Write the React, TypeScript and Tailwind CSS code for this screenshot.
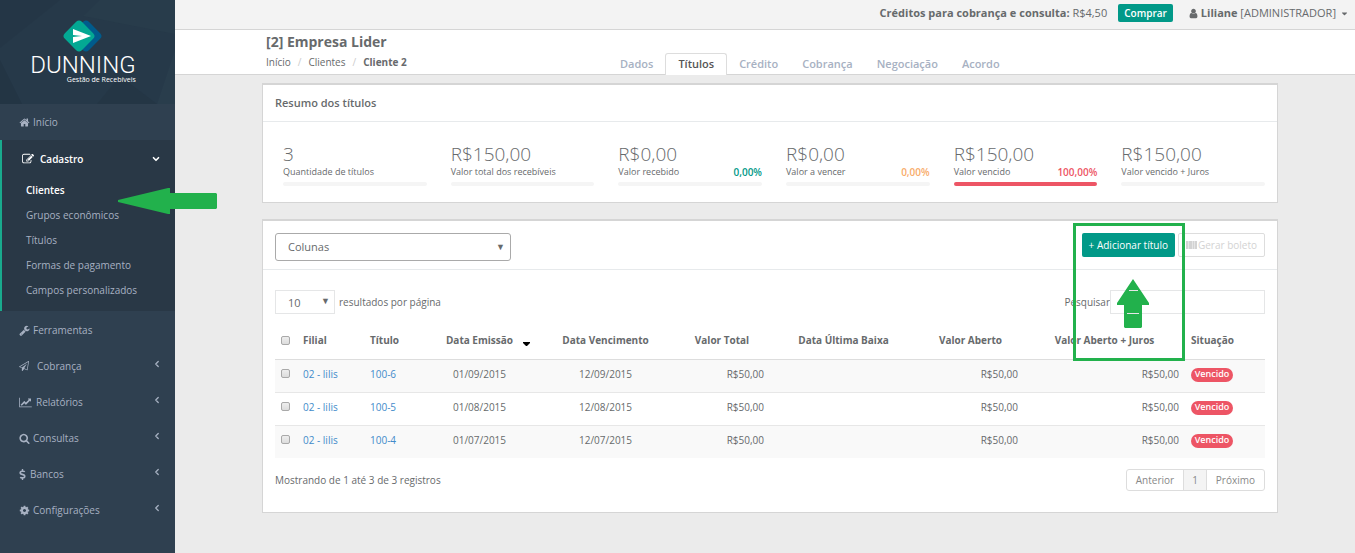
import type { ReactNode } from 'react';
import { ChevronDown, ChevronLeft } from 'lucide-react';
import { FaCaretDown, FaDollarSign } from 'react-icons/fa';

const icons = {
  home: 'M1472 992v480q0 26-19 45t-45 19h-384v-384h-256v384h-384q-26 0-45-19t-19-45v-480q0-1 .5-3t.5-3l575-474 575 474q1 2 1 6zm223-69l-62 74q-8 9-21 11h-3q-13 0-21-7l-692-577-692 577q-12 8-24 7-13-2-21-11l-62-74q-8-10-7-23.5t11-21.5l719-599q32-26 76-26t76 26l244 204v-195q0-14 9-23t23-9h192q14 0 23 9t9 23v408l219 182q10 8 11 21.5t-7 23.5z',
  edit: 'M888 1184l116-116-152-152-116 116v56h96v96h56zm440-720q-16-16-33 1l-350 350q-17 17-1 33t33-1l350-350q17-17 1-33zm80 594v190q0 119-84.5 203.5t-203.5 84.5h-832q-119 0-203.5-84.5t-84.5-203.5v-832q0-119 84.5-203.5t203.5-84.5h832q63 0 117 25 15 7 18 23 3 17-9 29l-49 49q-14 14-32 8-23-6-45-6h-832q-66 0-113 47t-47 113v832q0 66 47 113t113 47h832q66 0 113-47t47-113v-126q0-13 9-22l64-64q15-15 35-7t20 29zm-96-738l288 288-672 672h-288v-288zm444 132l-92 92-288-288 92-92q28-28 68-28t68 28l152 152q28 28 28 68t-28 68z',
  user: 'M1536 1399q0 109-62.5 187t-150.5 78h-854q-88 0-150.5-78t-62.5-187q0-85 8.5-160.5t31.5-152 58.5-131 94-89 134.5-34.5q131 128 313 128t313-128q76 0 134.5 34.5t94 89 58.5 131 31.5 152 8.5 160.5zm-256-887q0 159-112.5 271.5t-271.5 112.5-271.5-112.5-112.5-271.5 112.5-271.5 271.5-112.5 271.5 112.5 112.5 271.5z',
  chart: 'M2048 1536v128h-2048v-1536h128v1408h1920zm-128-1248v435q0 21-19.5 29.5t-35.5-7.5l-121-121-633 633q-10 10-23 10t-23-10l-233-233-416 416-192-192 585-585q10-10 23-10t23 10l233 233 464-464-121-121q-16-16-7.5-35.5t29.5-19.5h435q14 0 23 9t9 23z',
  plane: 'M1764 11q33 24 27 64l-256 1536q-5 29-32 45-14 8-31 8-11 0-24-5l-527-215-298 327q-18 21-47 21-14 0-23-4-19-7-30-23.5t-11-36.5v-452l-472-193q-37-14-40-55-3-39 32-59l1664-960q35-21 68 2zm-342 1499l221-1323-1434 827 336 137 863-639-478 797z',
  search: 'M1216 832q0-185-131.5-316.5t-316.5-131.5-316.5 131.5-131.5 316.5 131.5 316.5 316.5 131.5 316.5-131.5 131.5-316.5zm512 832q0 52-38 90t-90 38q-54 0-90-38l-343-342q-179 124-399 124-143 0-273.5-55.5t-225-150-150-225-55.5-273.5 55.5-273.5 150-225 225-150 273.5-55.5 273.5 55.5 225 150 150 225 55.5 273.5q0 220-124 399l343 343q37 37 37 90z',
  cog: 'M1152 896q0-106-75-181t-181-75-181 75-75 181 75 181 181 75 181-75 75-181zm512-109v222q0 12-8 23t-20 13l-185 28q-19 54-39 91 35 50 107 138 10 12 10 25t-9 23q-27 37-99 108t-94 71q-12 0-26-9l-138-108q-44 23-91 38-16 136-29 186-7 28-36 28h-222q-14 0-24.5-8.5t-11.5-21.5l-28-184q-49-16-90-37l-141 107q-10 9-25 9-14 0-25-11-126-114-165-168-7-10-7-23 0-12 8-23 15-21 51-66.5t54-70.5q-27-50-41-99l-183-27q-13-2-21-12.5t-8-23.5v-222q0-12 8-23t19-13l186-28q14-46 39-92-40-57-107-138-10-12-10-24 0-10 9-23 26-36 98.5-107.5t94.5-71.5q13 0 26 10l138 107q44-23 91-38 16-136 29-186 7-28 36-28h222q14 0 24.5 8.5t11.5 21.5l28 184q49 16 90 37l142-107q9-9 24-9 13 0 25 10 129 119 165 170 7 8 7 22 0 12-8 23-15 21-51 66.5t-54 70.5q26 50 41 98l183 28q13 2 21 12.5t8 23.5z',
  wrench: 'M448 1472q0-26-19-45t-45-19-45 19-19 45 19 45 45 19 45-19 19-45zm644-420l-682 682q-37 37-90 37-52 0-91-37l-106-108q-38-36-38-90 0-53 38-91l681-681q39 98 114.5 173.5t173.5 114.5zm634-435q0 39-23 106-47 134-164.5 217.5t-258.5 83.5q-185 0-316.5-131.5t-131.5-316.5 131.5-316.5 316.5-131.5q58 0 121.5 16.5t107.5 46.5q16 11 16 28t-16 28l-293 169v224l193 107q5-3 79-48.5t135.5-81 70.5-35.5q15 0 23.5 10t8.5 25z',
};

function Icon({ name, className }: { name: keyof typeof icons; className: string }) {
  return (
    <svg viewBox={name === 'chart' ? '0 0 2048 1792' : '0 0 1792 1792'} fill="currentColor" className={className} aria-hidden="true">
      <path d={icons[name]} />
    </svg>
  );
}

interface MenuItem {
  label: string;
  icon: ReactNode;
  hasChildren: boolean;
}

const menu: MenuItem[] = [
  { label: 'Ferramentas', icon: <Icon name="wrench" className="mr-[3px] size-[11px]" />, hasChildren: false },
  { label: 'Cobrança', icon: <Icon name="plane" className="mr-2 size-[10px]" />, hasChildren: true },
  { label: 'Relatórios', icon: <Icon name="chart" className="mr-1 h-[11px] w-[13px]" />, hasChildren: true },
  { label: 'Consultas', icon: <Icon name="search" className="mr-[3px] size-[11px]" />, hasChildren: true },
  { label: 'Bancos', icon: <FaDollarSign className="mr-1 h-[11px] w-[7px]" />, hasChildren: true },
  { label: 'Configurações', icon: <Icon name="cog" className="mr-[3px] size-[11px]" />, hasChildren: true },
];

const submenu = ['Clientes', 'Grupos econômicos', 'Títulos', 'Formas de pagamento', 'Campos personalizados'];

const tabs = ['Dados', 'Títulos', 'Crédito', 'Cobrança', 'Negociação', 'Acordo'];

const stats = [
  { value: '3', label: 'Quantidade de títulos', percent: '', color: '', bar: 'bg-[#f5f5f5]' },
  { value: 'R$150,00', label: 'Valor total dos recebíveis', percent: '', color: '', bar: 'bg-[#f5f5f5]' },
  { value: 'R$0,00', label: 'Valor recebido', percent: '0,00%', color: 'text-[#019988]', bar: 'bg-[#f5f5f5]' },
  { value: 'R$0,00', label: 'Valor a vencer', percent: '0,00%', color: 'text-[#f8ac6a]', bar: 'bg-[#f5f5f5]' },
  { value: 'R$150,00', label: 'Valor vencido', percent: '100,00%', color: 'text-[#ed5565]', bar: 'bg-[#ed5565]' },
  { value: 'R$150,00', label: 'Valor vencido + Juros', percent: '', color: '', bar: 'bg-[#f5f5f5]' },
];

const rows = [
  { filial: '02 - lilis', titulo: '100-6', emissao: '01/09/2015', vencimento: '12/09/2015', valor: 'R$50,00' },
  { filial: '02 - lilis', titulo: '100-5', emissao: '01/08/2015', vencimento: '12/08/2015', valor: 'R$50,00' },
  { filial: '02 - lilis', titulo: '100-4', emissao: '01/07/2015', vencimento: '12/07/2015', valor: 'R$50,00' },
];

function Checkbox({ label }: { label: string }) {
  return (
    <input
      type="checkbox"
      aria-label={label}
      className="block size-[9px] appearance-none rounded-[2px] border border-[#a9a9a9] bg-linear-to-b from-[#eeeeee] to-[#dcdcdc] checked:bg-[#019988]"
    />
  );
}

function Brand() {
  return (
    <div className="relative h-[104px] overflow-hidden bg-[#263949]">
      <svg viewBox="0 0 175 104" className="absolute inset-0 size-full" preserveAspectRatio="none" aria-hidden="true">
        <path d="M0 0h60L0 48z" fill="#243646" />
        <path d="M100 0h75v34l-92-18z" fill="#283c4b" />
        <path d="M0 60l22 44H0z" fill="#233544" />
        <path d="M175 50l-18 54h18z" fill="#293d4c" />
        <path d="M120 76l37 28h-60z" fill="#243645" />
      </svg>
      <div className="relative flex flex-col items-center pt-[18px] pr-[9px]">
        <svg viewBox="0 0 42 36" className="h-9 w-[42px]" aria-hidden="true">
          <rect x="12" y="6" width="24" height="24" rx="4" transform="rotate(45 24 18)" fill="#005b8c" />
          <rect x="5" y="6" width="24" height="24" rx="4" transform="rotate(45 17 18)" fill="#03a893" />
          <path d="M11 11l18 7-18 7v-6l9-1-9-1z" fill="#fff" />
        </svg>
        <div className="flex flex-col items-end text-white">
          <span className="font-[Roboto,sans-serif] text-[24px] leading-[23px] font-light">DUNNING</span>
          <span className="text-[7px] leading-[6px]">Gestão de Recebíveis</span>
        </div>
      </div>
    </div>
  );
}

function Sidebar() {
  return (
    <aside className="w-[175px] shrink-0 bg-[#2f4050] text-[#a7b1c2]">
      <Brand />
      <nav>
        <a href="#inicio" className="flex h-9 items-center pl-[19px]">
          <Icon name="home" className="mr-[3px] size-[11px]" />
          Início
        </a>
        <div className="relative border-l-2 border-[#19aa8d] bg-[#293846] pb-[9px]">
          <a href="#cadastro" className="flex h-[37px] items-center pr-[14px] pl-5 font-semibold text-white">
            <Icon name="edit" className="mr-[6px] size-[12px]" />
            Cadastro
            <ChevronDown className="ml-auto size-[10px]" strokeWidth={4} />
          </a>
          <ul>
            {submenu.map((item) => (
              <li key={item}>
                <a
                  href="#submenu"
                  className={item === 'Clientes' ? 'flex h-[25px] items-center pl-6 font-semibold text-white' : 'flex h-[25px] items-center pl-6'}
                >
                  {item}
                </a>
              </li>
            ))}
          </ul>
          {/* arrow pointing at the current submenu entry */}
          <svg viewBox="0 0 99 26" className="absolute top-12 left-[116px] z-10 h-[26px] w-[99px]" fill="#22b14c" aria-hidden="true">
            <path d="M0 12L50 0h2v5h46l1 1v14l-1 1H52v5h-2L0 14z" />
          </svg>
        </div>
        <ul className="pt-px">
          {menu.map((item) => (
            <li key={item.label}>
              <a href="#menu" className="flex h-9 items-center pr-[13px] pl-[19px]">
                {item.icon}
                {item.label}
                {item.hasChildren && <ChevronLeft className="mb-1 ml-auto size-[10px]" strokeWidth={3} />}
              </a>
            </li>
          ))}
        </ul>
      </nav>
    </aside>
  );
}

function PageHeader() {
  return (
    <header>
      <div className="flex h-[30px] items-center justify-end border-b border-[#d5d5d5] bg-[#f3f3f3] pr-[6px] pb-[3px] text-[11px]">
        <span className="mr-[11px]">
          <b>Créditos para cobrança e consulta:</b> R$4,50
        </span>
        <button className="mr-[15px] h-[18px] rounded-[2px] bg-[#019988] px-[6px] text-[10px] font-semibold text-white">Comprar</button>
        <button className="flex items-center">
          <Icon name="user" className="mr-[2px] size-[11px]" />
          <span>
            <b>Liliane</b> [ADMINISTRADOR]
          </span>
          <FaCaretDown className="ml-1 size-[9px]" />
        </button>
      </div>
      <div className="flex h-[45px] border-b border-[#d5d5d5] bg-white pl-[91px]">
        <div className="w-[342px] pt-[3px]">
          <h1 className="text-[14px] leading-[18px] font-bold">[2] Empresa Lider</h1>
          <ol className="flex pt-[3px] leading-[16px]">
            <li>
              <a href="#inicio">Início</a>
            </li>
            <li className="px-[7px] text-[#cccccc]">/</li>
            <li>
              <a href="#clientes">Clientes</a>
            </li>
            <li className="px-[7px] text-[#cccccc]">/</li>
            <li className="font-bold">Cliente 2</li>
          </ol>
        </div>
        <nav className="-mb-px flex items-end text-[11px] font-semibold text-[#a7b1c2]">
          {tabs.map((tab) => (
            <a
              key={tab}
              href="#tab"
              className={
                tab === 'Títulos'
                  ? 'h-[22px] rounded-t-[3px] border border-b-0 border-[#dddddd] bg-white px-3 leading-[20px] text-[#555555]'
                  : 'h-[22px] px-3 leading-[22px]'
              }
            >
              {tab}
            </a>
          ))}
        </nav>
      </div>
    </header>
  );
}

function Summary() {
  return (
    <section className="border border-t-2 border-[#d5d5d5] bg-white">
      <h2 className="border-b border-[#e7eaec] px-3 text-[11px] leading-[36px] font-semibold">Resumo dos títulos</h2>
      <div className="grid h-[80px] grid-cols-6 gap-6 pt-[21px] pr-3 pl-5">
        {stats.map((stat) => (
          <div key={stat.label}>
            <p className="text-[19px] leading-[22px] font-light">{stat.value}</p>
            <p className="flex justify-between pt-px text-[9px] leading-[12px] whitespace-nowrap">
              {stat.label}
              <span className={`text-[10px] font-semibold ${stat.color}`}>{stat.percent}</span>
            </p>
            <div className={`mt-1 h-1 rounded-full ${stat.bar}`} />
          </div>
        ))}
      </div>
    </section>
  );
}

function TitlesTable() {
  return (
    <table className="w-full table-fixed">
      <colgroup>
        <col className="w-[22px]" />
        <col className="w-[67px]" />
        <col className="w-[58px]" />
        <col className="w-[115px]" />
        <col className="w-[137px]" />
        <col className="w-[96px]" />
        <col className="w-[147px]" />
        <col className="w-[107px]" />
        <col className="w-[161px]" />
        <col className="w-[80px]" />
      </colgroup>
      <thead>
        <tr className="h-[37px] border-b border-[#dddddd] whitespace-nowrap">
          <th className="px-[6px]">
            <Checkbox label="Selecionar todos" />
          </th>
          <th className="px-[6px] text-left">Filial</th>
          <th className="px-[6px] text-left">Título</th>
          <th className="relative px-[6px] text-center">
            Data Emissão
            <svg viewBox="0 0 7 4" className="absolute top-[20px] right-[7px] h-1 w-[7px]" aria-hidden="true">
              <path d="M0 0h7v1L4 4H3L0 1z" fill="#000" />
            </svg>
          </th>
          <th className="px-[6px] text-center">Data Vencimento</th>
          <th className="px-[6px] text-center">Valor Total</th>
          <th className="px-[6px] text-center">Data Última Baixa</th>
          <th className="px-[6px] text-center">Valor Aberto</th>
          <th className="px-[6px] text-center">Valor Aberto + Juros</th>
          <th className="px-[6px] text-left">Situação</th>
        </tr>
      </thead>
      <tbody>
        {rows.map((row) => (
          <tr key={row.titulo} className="h-[33px] border-b border-[#e7e7e7] last:border-b-0 odd:bg-[#f9f9f9]">
            <td className="px-[6px] pb-1">
              <Checkbox label={`Selecionar ${row.titulo}`} />
            </td>
            <td className="px-[6px] pb-1">
              <a href="#filial" className="text-[#428bca]">{row.filial}</a>
            </td>
            <td className="px-[6px] pb-1">
              <a href="#titulo" className="text-[#428bca]">{row.titulo}</a>
            </td>
            <td className="px-[6px] pb-1 text-center">{row.emissao}</td>
            <td className="px-[6px] pb-1 text-center">{row.vencimento}</td>
            <td className="px-[6px] pb-1 text-right">{row.valor}</td>
            <td />
            <td className="px-[6px] pb-1 text-right">{row.valor}</td>
            <td className="px-[6px] pb-1 text-right">{row.valor}</td>
            <td className="px-[6px] pb-[2px]">
              <span className="block w-[42px] rounded-full bg-[#ed5565] pb-[2px] text-center text-[9px] leading-[12px] font-semibold text-white">
                Vencido
              </span>
            </td>
          </tr>
        ))}
      </tbody>
    </table>
  );
}

function Titles() {
  return (
    <section className="relative mt-4 border border-t-2 border-[#d5d5d5] bg-white">
      <div className="flex justify-between border-b border-[#e7eaec] px-3 pt-3 pb-2">
        <div className="relative w-[236px]">
          <select aria-label="Colunas" className="h-7 w-full appearance-none rounded-[3px] border border-[#aaaaaa] bg-white px-3 text-[11px]">
            <option>Colunas</option>
          </select>
          <span className="pointer-events-none absolute top-[7px] right-[6px] text-[9px] leading-[14px]">▼</span>
        </div>
        <div className="flex gap-[3px]">
          <button className="h-6 rounded-[2px] bg-[#019988] px-[7px] text-white">+ Adicionar título</button>
          <button disabled className="flex h-6 items-center rounded-[2px] border border-[#dddddd] px-[7px] text-[#d3d3d3]">
            <svg viewBox="0 0 11 8" className="mr-px h-2 w-[11px]" fill="currentColor" aria-hidden="true">
              <path d="M0 0h2v8H0zM3 0h3v8H3zM7 0h1v8H7zM9 0h2v8H9z" />
              <path d="M0 0h11v8H0z" opacity="0.6" />
            </svg>
            Gerar boleto
          </button>
        </div>
      </div>

      <div className="px-3 pt-5 pb-[21px]">
        <div className="flex items-start justify-between">
          <label className="flex items-center gap-1">
            <span className="relative">
              <select className="block h-6 w-[60px] appearance-none border border-[#e5e6e7] bg-white px-3 pt-px text-[11px]">
                <option>10</option>
              </select>
              <span className="pointer-events-none absolute top-[4px] right-[5px] text-[9px] leading-[14px]">▼</span>
            </span>
            resultados por página
          </label>
          <label className="flex items-center">
            Pesquisar
            <input type="text" className="h-6 w-[155px] border border-[#e5e6e7] bg-white px-2" />
          </label>
        </div>
        <div className="mt-2">
          <TitlesTable />
        </div>
        <div className="flex items-center justify-between pt-[11px]">
          <p>Mostrando de 1 até 3 de 3 registros</p>
          <div className="flex divide-x divide-[#dddddd] overflow-hidden rounded-[3px] border border-[#dddddd] text-[#888888]">
            <button className="h-5 px-[9px]">Anterior</button>
            <button className="h-5 bg-[#f4f4f4] px-2">1</button>
            <button className="h-5 px-[9px]">Próximo</button>
          </div>
        </div>
      </div>

      {/* highlight around the add button */}
      <div className="pointer-events-none absolute top-[2px] right-[92px] h-[138px] w-[112px] border-3 border-[#22b14c]">
        <svg viewBox="0 0 32 49" className="absolute top-[53px] left-[41px] h-[49px] w-8" aria-hidden="true">
          <path d="M16 0L32 24v2h-7v22l-1 1H8l-1-1V26H0v-2z" fill="#22b14c" />
          <path d="M12 11.500h9M10 34.500h12" stroke="#e5e6e7" />
        </svg>
      </div>
    </section>
  );
}

export default function App() {
  return (
    <div className="flex min-h-screen bg-[#ebebeb] font-['Open_Sans',sans-serif] text-[10px] leading-[16px] text-[#676a6c]">
      <Sidebar />
      <div className="min-w-0 flex-1">
        <PageHeader />
        <main className="pt-2 pr-[77px] pb-10 pl-[87px]">
          <Summary />
          <Titles />
        </main>
      </div>
    </div>
  );
}
